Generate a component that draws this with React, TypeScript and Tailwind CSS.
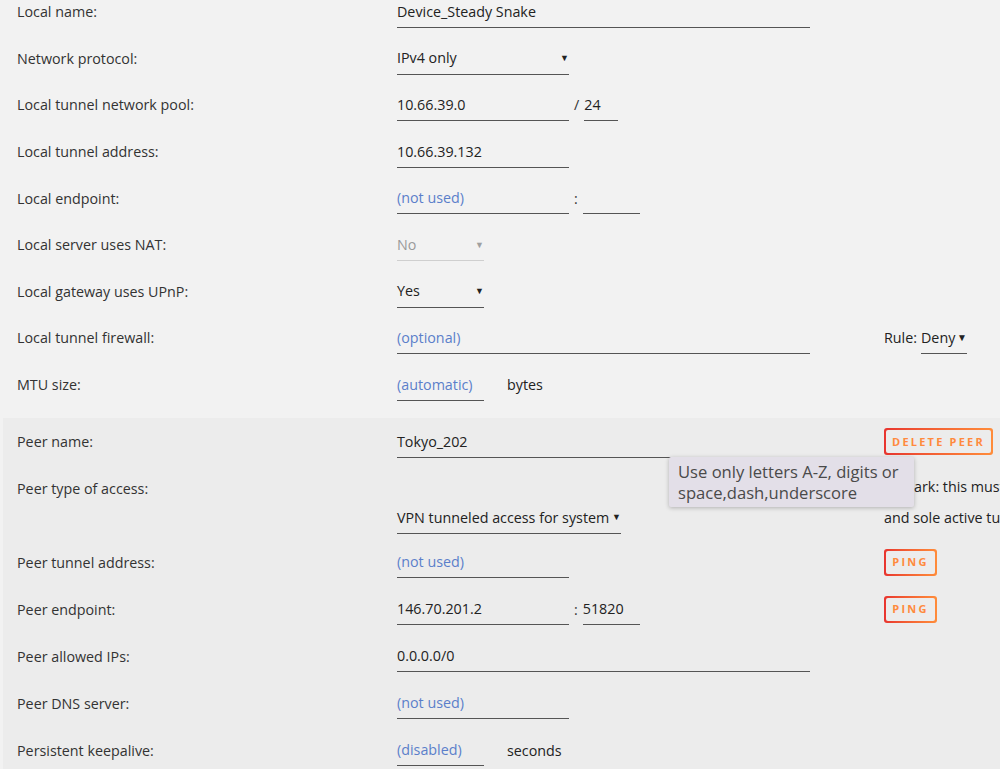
import React from "react";

const font = { fontFamily: '"Open Sans", "Noto Sans", sans-serif' };

function Field({
  value,
  placeholder,
  width,
  muted,
}: {
  value?: string;
  placeholder?: string;
  width: string;
  muted?: boolean;
}) {
  return (
    <div className={`flex h-8 shrink-0 items-center border-b ${muted ? "border-[#c8c8c8]" : "border-[#555]"} ${width}`}>
      {value ? (
        <span className="text-[14.3px] text-[#222]">{value}</span>
      ) : (
        <span className="text-[14.3px] text-[#5b7fca]">{placeholder}</span>
      )}
    </div>
  );
}

function Select({ value, width, muted }: { value: string; width: string; muted?: boolean }) {
  return (
    <div
      className={`flex h-8 shrink-0 items-center justify-between border-b ${muted ? "border-[#cfcfcf] text-[#9a9a9a]" : "border-[#555] text-[#222]"} ${width}`}
    >
      <span className="text-[14.3px]">{value}</span>
      <span className={`text-[9px] ${muted ? "text-[#a0a0a0]" : "text-[#222]"}`}>▼</span>
    </div>
  );
}

function Row({
  label,
  children,
  right,
  h = "h-[46.6px]",
}: {
  label: string;
  children: React.ReactNode;
  right?: React.ReactNode;
  h?: string;
}) {
  return (
    <div className={`flex items-center ${h}`}>
      <div className="w-[397px] shrink-0 pl-[17px] text-[14.3px] text-[#333]">{label}</div>
      <div className="flex w-[487px] shrink-0 items-center">{children}</div>
      <div className="min-w-0 flex-1 whitespace-nowrap">{right}</div>
    </div>
  );
}

function OutlineButton({ label, wide }: { label: string; wide?: boolean }) {
  return (
    <div className={`rounded-[3px] bg-gradient-to-r from-[#e8342f] to-[#ff8c3a] p-[2px] ${wide ? "w-[109px]" : "w-[53px]"}`}>
      <div className="flex h-[23px] items-center justify-center rounded-[2px] bg-[#ececec] pt-[1px] text-[11px] font-bold tracking-[0.2em] text-[#ff8a3d]">
        {label}
      </div>
    </div>
  );
}

export default function App() {
  return (
    <div className="h-[769px] w-[1000px] overflow-hidden bg-[#f2f2f2]" style={font}>
      {/* Local interface */}
      <section className="-mt-[11.3px] pb-[10px]">
        <Row label="Local name:">
          <Field value="Device_Steady Snake" width="w-[413px]" />
        </Row>
        <Row label="Network protocol:">
          <Select value="IPv4 only" width="w-[172px]" />
        </Row>
        <Row label="Local tunnel network pool:">
          <Field value="10.66.39.0" width="w-[172px]" />
          <span className="ml-[5px] mr-[5px] text-[14.3px] text-[#333]">/</span>
          <Field value="24" width="w-[34px]" />
        </Row>
        <Row label="Local tunnel address:">
          <Field value="10.66.39.132" width="w-[172px]" />
        </Row>
        <Row label="Local endpoint:">
          <Field placeholder="(not used)" width="w-[172px]" />
          <span className="ml-[5px] mr-[5px] text-[14.3px] text-[#333]">:</span>
          <Field value="" width="w-[57px]" />
        </Row>
        <Row label="Local server uses NAT:">
          <Select value="No" width="w-[87px]" muted />
        </Row>
        <Row label="Local gateway uses UPnP:">
          <Select value="Yes" width="w-[87px]" />
        </Row>
        <Row
          label="Local tunnel firewall:"
          right={
            <div className="flex items-center text-[14.3px] text-[#222]">
              <span className="mr-[4px]">Rule:</span>
              <div className="flex h-8 w-[46px] items-center justify-between border-b border-[#555]">
                <span>Deny</span>
                <span className="text-[10px]">▼</span>
              </div>
            </div>
          }
        >
          <Field placeholder="(optional)" width="w-[413px]" />
        </Row>
        <Row label="MTU size:">
          <Field placeholder="(automatic)" width="w-[87px]" />
          <span className="ml-[23px] text-[14.3px] text-[#222]">bytes</span>
        </Row>
      </section>

      {/* Peer */}
      <section className="ml-[3px] bg-[#ececec] pt-[0.7px]">
        <div className="-ml-[3px]">
          <div className="relative">
            <Row label="Peer name:" h="h-[46px]" right={<OutlineButton label="DELETE PEER" wide />}>
              <Field value="Tokyo_202" width="w-[413px]" />
            </Row>
            <div className="absolute left-[669px] top-[38px] z-10 w-[245px] rounded-[2px] bg-[#e3dfe8] px-[9px] py-[4px] text-[16.6px] leading-[21px] text-[#4a4a4a] shadow-[0_1px_4px_rgba(0,0,0,0.25)]">
              Use only letters A-Z, digits or
              <br />
              space,dash,underscore
            </div>
          </div>

          <div className="flex h-[74px]">
            <div className="w-[397px] shrink-0 pl-[17px] pt-[13px] text-[14.3px] text-[#333]">Peer type of access:</div>
            <div className="flex w-[487px] shrink-0 items-end pb-[5px]">
              <Select value="VPN tunneled access for system" width="w-[224px]" />
            </div>
            <div className="min-w-0 flex-1 whitespace-nowrap pt-[6px] text-[14.3px] leading-[31px] text-[#222]">
              <div>Remark: this must be the only</div>
              <div>and sole active tunnel</div>
            </div>
          </div>

          <Row label="Peer tunnel address:" h="h-[47px]" right={<OutlineButton label="PING" />}>
            <Field placeholder="(not used)" width="w-[172px]" />
          </Row>
          <Row label="Peer endpoint:" h="h-[47px]" right={<OutlineButton label="PING" />}>
            <Field value="146.70.201.2" width="w-[172px]" />
            <span className="ml-[5px] mr-[5px] text-[14.3px] text-[#333]">:</span>
            <Field value="51820" width="w-[57px]" />
          </Row>
          <Row label="Peer allowed IPs:" h="h-[47px]">
            <Field value="0.0.0.0/0" width="w-[413px]" />
          </Row>
          <Row label="Peer DNS server:" h="h-[47px]">
            <Field placeholder="(not used)" width="w-[172px]" />
          </Row>
          <Row label="Persistent keepalive:" h="h-[47px]">
            <Field placeholder="(disabled)" width="w-[87px]" />
            <span className="ml-[23px] text-[14.3px] text-[#222]">seconds</span>
          </Row>
        </div>
      </section>
    </div>
  );
}
